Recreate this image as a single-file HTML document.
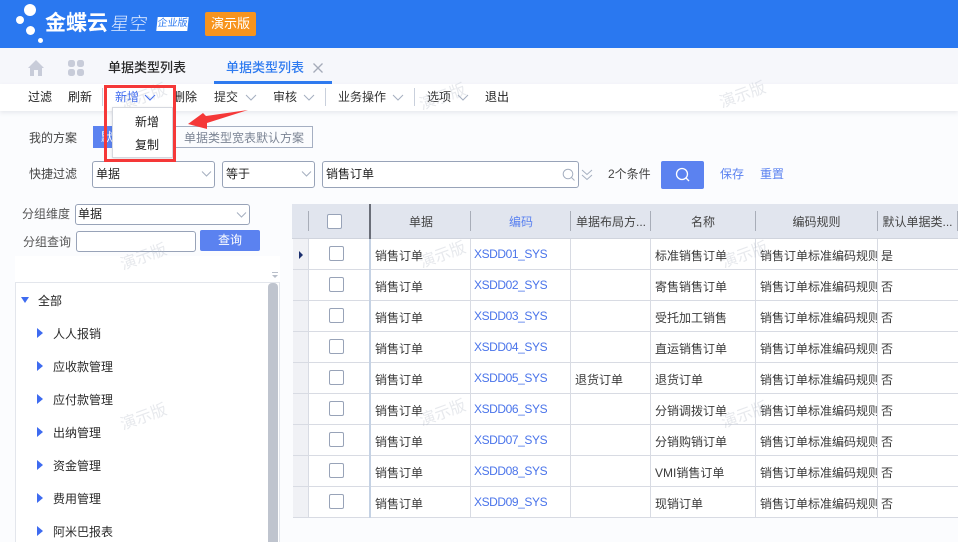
<!DOCTYPE html>
<html lang="zh"><head><meta charset="utf-8"><title>单据类型列表</title>
<style>
*{box-sizing:border-box;margin:0;padding:0}
html,body{width:958px;height:542px;overflow:hidden}
body{position:relative;background:#fbfcfe;font:12px/16px "Liberation Sans","Noto Sans CJK SC",sans-serif;color:#333}
.a,.t{position:absolute}
.t{white-space:nowrap}
.inp{position:absolute;background:#fff;border:1px solid #98a3b8;border-radius:3px;color:#222;padding-left:3px}
.sep{position:absolute;top:88px;width:1px;height:18px;background:#c9d0dc}
.wm{position:absolute;font-size:16px;line-height:20px;color:rgba(175,182,195,.3);transform:rotate(-20deg);white-space:nowrap;z-index:30;pointer-events:none}
.r{position:absolute;left:293px;width:665px;height:31px;background:#fff;border-bottom:1px solid #d8dbe3}
.r span{position:absolute;top:9px;white-space:nowrap;overflow:hidden;color:#3a3a3a}
.r .h{position:absolute;left:0;top:0;width:16px;height:30px;background:#f0f1f5;border-right:1px solid #d8dbe3}
.r i{position:absolute;top:0;height:30px;width:1px;background:#d8dbe3}
.r b{position:absolute;left:36px;top:7px;width:15px;height:15px;background:#fff;border:1px solid #98a3b8;border-radius:2px}
.r em{position:absolute;left:76px;top:0;width:2px;height:31px;background:#c5d2e4}
.r .c{left:181px;top:7px;color:#4a74ea;font-style:normal;letter-spacing:-.42px}
.r .d{left:82px}.r .e{left:282px}.r .f{left:362px}.r .g{left:467px;width:117px}.r .j{left:588px}
.hc{position:absolute;top:214px;text-align:center;color:#444;white-space:nowrap}
.hs{position:absolute;top:211px;width:1px;height:20px;background:#a8adb8}
.ti{position:absolute;left:53px;color:#2a2a2a}
.tr{position:absolute;left:37px;width:0;height:0;border-left:6px solid #3e6bf0;border-top:5px solid transparent;border-bottom:5px solid transparent}
svg{position:absolute;overflow:visible}
</style></head><body>
<div class="a" style="left:0;top:0;width:958px;height:48px;background:#2a78f0"></div>
<div class="a" style="left:24px;top:4px;width:12px;height:12px;border-radius:50%;background:#fff"></div>
<div class="a" style="left:16px;top:16px;width:8px;height:8px;border-radius:50%;background:#fff"></div>
<div class="a" style="left:26px;top:26px;width:9px;height:9px;border-radius:50%;background:#fff"></div>
<div class="a" style="left:38px;top:38px;width:5px;height:5px;border-radius:50%;background:#fff"></div>
<div class="t" style="left:45px;top:12px;font-size:21px;line-height:24px;font-weight:700;color:#fff">金蝶云</div>
<div class="t" style="left:111px;top:12px;font-size:18px;line-height:24px;font-weight:300;color:#e4eeff;transform:skewX(-8deg);letter-spacing:.5px">星空</div>
<div class="t" style="left:157px;top:17px;width:31px;height:14px;background:#fff;color:#2a78f0;font-size:10px;line-height:14px;text-align:center;transform:skewX(-6deg)">企业版</div>
<div class="t" style="left:205px;top:12px;width:51px;height:24px;background:#f7941e;border-radius:2px;color:#fff;font-size:13px;line-height:24px;text-align:center">演示版</div>

<div class="a" style="left:0;top:48px;width:958px;height:36px;background:#f6f7fb"></div>
<svg style="left:28px;top:60px" width="16" height="16" viewBox="0 0 16 16"><path d="M8 0 L16 8 L14 8 L14 16 L10 16 L10 10 L6 10 L6 16 L2 16 L2 8 L0 8 Z" fill="#c8ccd9"/></svg>
<svg style="left:68px;top:60px" width="16" height="16" viewBox="0 0 16 16" fill="#c8ccd9"><rect width="7" height="7" rx="2.500"/><rect x="9" width="7" height="7" rx="2.500"/><rect y="9" width="7" height="7" rx="2.500"/><rect x="9" y="9" width="7" height="7" rx="2.500"/></svg>
<div class="t" style="left:108px;top:60px;font-size:13px;color:#2a2a2a;font-weight:500">单据类型列表</div>
<div class="t" style="left:226px;top:60px;font-size:13px;color:#2f7bf0;font-weight:500">单据类型列表</div>
<svg style="left:313px;top:63px" width="10" height="10" viewBox="0 0 10 10"><path d="M0.500 0.500 L9.500 9.500 M9.500 0.500 L0.500 9.500" stroke="#a5abb8" stroke-width="1.300" fill="none"/></svg>
<div class="a" style="left:214px;top:81px;width:118px;height:3px;background:#2f7bf0"></div>

<div class="a" style="left:0;top:84px;width:958px;height:27px;background:#fff;box-shadow:0 2px 4px rgba(120,130,150,.15)"></div>
<div class="t" style="left:28px;top:89px;color:#222">过滤</div>
<div class="t" style="left:68px;top:89px;color:#222">刷新</div>
<div class="sep" style="left:102px"></div>
<div class="t" style="left:115px;top:89px;color:#3e6bf0">新增</div>
<svg style="left:144px;top:94px" width="12" height="7" viewBox="0 0 12 7"><path d="M1 1 L6 6 L11 1" stroke="#3e6bf0" fill="none"/></svg>
<div class="t" style="left:173px;top:89px;color:#222">删除</div>
<div class="t" style="left:214px;top:89px;color:#333">提交</div>
<svg style="left:245px;top:94px" width="12" height="7" viewBox="0 0 12 7"><path d="M1 1 L6 6 L11 1" stroke="#a5afc0" fill="none"/></svg>
<div class="t" style="left:273px;top:89px;color:#333">审核</div>
<svg style="left:303px;top:94px" width="12" height="7" viewBox="0 0 12 7"><path d="M1 1 L6 6 L11 1" stroke="#a5afc0" fill="none"/></svg>
<div class="sep" style="left:325px"></div>
<div class="t" style="left:338px;top:89px;color:#333">业务操作</div>
<svg style="left:392px;top:94px" width="12" height="7" viewBox="0 0 12 7"><path d="M1 1 L6 6 L11 1" stroke="#a5afc0" fill="none"/></svg>
<div class="sep" style="left:414px"></div>
<div class="t" style="left:427px;top:89px;color:#333">选项</div>
<svg style="left:457px;top:94px" width="12" height="7" viewBox="0 0 12 7"><path d="M1 1 L6 6 L11 1" stroke="#a5afc0" fill="none"/></svg>
<div class="t" style="left:485px;top:89px;color:#222">退出</div>

<div class="t" style="left:29px;top:130px;color:#444">我的方案</div>
<div class="a" style="left:93px;top:126px;width:60px;height:22px;background:#5b82f0;color:#fff;line-height:22px;padding-left:8px">默认</div>
<div class="a" style="left:175px;top:126px;width:138px;height:22px;border:1px solid #a5afc2;color:#7b8494;line-height:22px;text-align:center;background:#fbfcfe">单据类型宽表默认方案</div>

<div class="t" style="left:29px;top:166px;color:#444">快捷过滤</div>
<div class="inp" style="left:92px;top:161px;width:123px;height:27px;line-height:25px">单据</div>
<svg style="left:201px;top:171px" width="11" height="6" viewBox="0 0 11 6"><path d="M1 .5 L5.500 5 L10 .5" stroke="#a5afc0" fill="none"/></svg>
<div class="inp" style="left:222px;top:161px;width:93px;height:27px;line-height:25px">等于</div>
<svg style="left:301px;top:171px" width="11" height="6" viewBox="0 0 11 6"><path d="M1 .5 L5.500 5 L10 .5" stroke="#a5afc0" fill="none"/></svg>
<div class="inp" style="left:322px;top:161px;width:257px;height:27px;line-height:25px">销售订单</div>
<svg style="left:562px;top:168px" width="14" height="14" viewBox="0 0 14 14"><circle cx="6" cy="6" r="4.800" stroke="#a5afc0" fill="none"/><path d="M9.500 9.500 L12.500 12.500" stroke="#a5afc0" fill="none"/></svg>
<svg style="left:581px;top:169px" width="12" height="12" viewBox="0 0 12 12"><path d="M1 1 L6 5.500 L11 1 M1 6 L6 10.500 L11 6" stroke="#a5afc0" fill="none"/></svg>
<div class="t" style="left:608px;top:166px;color:#444">2个条件</div>
<div class="a" style="left:661px;top:161px;width:43px;height:28px;background:#5b82f0;border-radius:2px"></div>
<svg style="left:675px;top:167px" width="15" height="15" viewBox="0 0 15 15"><circle cx="7" cy="7" r="5.500" stroke="#fff" stroke-width="1.300" fill="none"/><path d="M11 11 L14 14" stroke="#fff" stroke-width="1.300"/></svg>
<div class="t" style="left:720px;top:166px;color:#5b82f0">保存</div>
<div class="t" style="left:760px;top:166px;color:#5b82f0">重置</div>

<div class="t" style="left:22px;top:206px;color:#555">分组维度</div>
<div class="inp" style="left:75px;top:204px;width:175px;height:21px;line-height:19px;padding-left:2px">单据</div>
<svg style="left:236px;top:212px" width="11" height="6" viewBox="0 0 11 6"><path d="M1 .5 L5.500 5 L10 .5" stroke="#a5afc0" fill="none"/></svg>
<div class="t" style="left:23px;top:234px;color:#555">分组查询</div>
<div class="inp" style="left:76px;top:231px;width:120px;height:21px"></div>
<div class="a" style="left:200px;top:230px;width:60px;height:21px;background:#5b82f0;border-radius:2px;color:#fff;text-align:center;line-height:21px">查询</div>
<div class="a" style="left:15px;top:256px;width:265px;height:286px;background:#fff"></div>
<div class="a" style="left:272px;top:272px;width:6px;height:1px;background:#b8bec9"></div>
<div class="a" style="left:272px;top:275px;width:0;height:0;border-left:3px solid transparent;border-right:3px solid transparent;border-top:3px solid #b8bec9"></div>
<div class="a" style="left:15px;top:282px;width:265px;height:260px;border:1px solid #e3e6ec;border-bottom:0;background:#fff"></div>
<div class="a" style="left:268px;top:283px;width:10px;height:259px;background:#bfc4ce;border-radius:4px 4px 0 0"></div>
<div class="a" style="left:21px;top:297px;width:0;height:0;border-top:6px solid #3e6bf0;border-left:4px solid transparent;border-right:4px solid transparent"></div>
<div class="t" style="left:38px;top:293px;color:#222">全部</div>
<div class="tr" style="top:328px"></div><div class="ti" style="top:326px">人人报销</div>
<div class="tr" style="top:361px"></div><div class="ti" style="top:359px">应收款管理</div>
<div class="tr" style="top:394px"></div><div class="ti" style="top:392px">应付款管理</div>
<div class="tr" style="top:427px"></div><div class="ti" style="top:425px">出纳管理</div>
<div class="tr" style="top:460px"></div><div class="ti" style="top:458px">资金管理</div>
<div class="tr" style="top:493px"></div><div class="ti" style="top:491px">费用管理</div>
<div class="tr" style="top:526px"></div><div class="ti" style="top:524px">阿米巴报表</div>

<div class="a" style="left:292px;top:204px;width:666px;height:35px;background:#e1e5ee;border-bottom:1px solid #d0d4dd"></div>
<div class="hs" style="left:308px"></div>
<div class="a" style="left:327px;top:214px;width:15px;height:15px;background:#fff;border:1px solid #98a3b8;border-radius:2px"></div>
<div class="a" style="left:369px;top:204px;width:2px;height:35px;background:#6a6e78"></div>
<div class="hc" style="left:371px;width:100px">单据</div><div class="hs" style="left:470px"></div>
<div class="hc" style="left:471px;width:100px;color:#5b82f0">编码</div><div class="hs" style="left:570px"></div>
<div class="hc" style="left:571px;width:80px">单据布局方...</div><div class="hs" style="left:650px"></div>
<div class="hc" style="left:651px;width:104px">名称</div><div class="hs" style="left:755px"></div>
<div class="hc" style="left:756px;width:121px">编码规则</div><div class="hs" style="left:877px"></div>
<div class="hc" style="left:878px;width:79px">默认单据类...</div><div class="hs" style="left:957px"></div>

<div class="r" style="top:239px"><div class="h"></div><b></b><em></em><i style="left:177px"></i><i style="left:277px"></i><i style="left:357px"></i><i style="left:462px"></i><i style="left:584px"></i><span class="d">销售订单</span><span class="c">XSDD01_SYS</span><span class="f">标准销售订单</span><span class="g">销售订单标准编码规则</span><span class="j">是</span></div>
<div class="a" style="left:299px;top:251px;width:0;height:0;border-left:4px solid #1b2f6e;border-top:4px solid transparent;border-bottom:4px solid transparent;z-index:3"></div>
<div class="r" style="top:270px"><div class="h"></div><b></b><em></em><i style="left:177px"></i><i style="left:277px"></i><i style="left:357px"></i><i style="left:462px"></i><i style="left:584px"></i><span class="d">销售订单</span><span class="c">XSDD02_SYS</span><span class="f">寄售销售订单</span><span class="g">销售订单标准编码规则</span><span class="j">否</span></div>
<div class="r" style="top:301px"><div class="h"></div><b></b><em></em><i style="left:177px"></i><i style="left:277px"></i><i style="left:357px"></i><i style="left:462px"></i><i style="left:584px"></i><span class="d">销售订单</span><span class="c">XSDD03_SYS</span><span class="f">受托加工销售</span><span class="g">销售订单标准编码规则</span><span class="j">否</span></div>
<div class="r" style="top:332px"><div class="h"></div><b></b><em></em><i style="left:177px"></i><i style="left:277px"></i><i style="left:357px"></i><i style="left:462px"></i><i style="left:584px"></i><span class="d">销售订单</span><span class="c">XSDD04_SYS</span><span class="f">直运销售订单</span><span class="g">销售订单标准编码规则</span><span class="j">否</span></div>
<div class="r" style="top:363px"><div class="h"></div><b></b><em></em><i style="left:177px"></i><i style="left:277px"></i><i style="left:357px"></i><i style="left:462px"></i><i style="left:584px"></i><span class="d">销售订单</span><span class="c">XSDD05_SYS</span><span class="e">退货订单</span><span class="f">退货订单</span><span class="g">销售订单标准编码规则</span><span class="j">否</span></div>
<div class="r" style="top:394px"><div class="h"></div><b></b><em></em><i style="left:177px"></i><i style="left:277px"></i><i style="left:357px"></i><i style="left:462px"></i><i style="left:584px"></i><span class="d">销售订单</span><span class="c">XSDD06_SYS</span><span class="f">分销调拨订单</span><span class="g">销售订单标准编码规则</span><span class="j">否</span></div>
<div class="r" style="top:425px"><div class="h"></div><b></b><em></em><i style="left:177px"></i><i style="left:277px"></i><i style="left:357px"></i><i style="left:462px"></i><i style="left:584px"></i><span class="d">销售订单</span><span class="c">XSDD07_SYS</span><span class="f">分销购销订单</span><span class="g">销售订单标准编码规则</span><span class="j">否</span></div>
<div class="r" style="top:456px"><div class="h"></div><b></b><em></em><i style="left:177px"></i><i style="left:277px"></i><i style="left:357px"></i><i style="left:462px"></i><i style="left:584px"></i><span class="d">销售订单</span><span class="c">XSDD08_SYS</span><span class="f">VMI销售订单</span><span class="g">销售订单标准编码规则</span><span class="j">否</span></div>
<div class="r" style="top:487px"><div class="h"></div><b></b><em></em><i style="left:177px"></i><i style="left:277px"></i><i style="left:357px"></i><i style="left:462px"></i><i style="left:584px"></i><span class="d">销售订单</span><span class="c">XSDD09_SYS</span><span class="f">现销订单</span><span class="g">销售订单标准编码规则</span><span class="j">否</span></div>

<div class="wm" style="left:120px;top:88px">演示版</div>
<div class="wm" style="left:419px;top:88px">演示版</div>
<div class="wm" style="left:719px;top:86px">演示版</div>
<div class="wm" style="left:120px;top:248px">演示版</div>
<div class="wm" style="left:419px;top:246px">演示版</div>
<div class="wm" style="left:721px;top:246px">演示版</div>
<div class="wm" style="left:120px;top:408px">演示版</div>
<div class="wm" style="left:419px;top:404px">演示版</div>
<div class="wm" style="left:721px;top:406px">演示版</div>

<div class="a" style="left:112px;top:107px;width:61px;height:51px;background:#fff;border:1px solid #d5d8df;box-shadow:0 1px 3px rgba(0,0,0,.12);z-index:40"></div>
<div class="t" style="left:135px;top:114px;color:#222;z-index:41">新增</div>
<div class="t" style="left:135px;top:137px;color:#222;z-index:41">复制</div>
<div class="a" style="left:104px;top:85px;width:72px;height:77px;border:3px solid #f53838;z-index:42"></div>
<svg style="left:188px;top:109px;z-index:42" width="60" height="20" viewBox="0 0 60 20"><path d="M60 1 L18 7 L15 4 L0 15 L19 20 L19 14 Z" fill="#f53838"/></svg>
</body></html>
